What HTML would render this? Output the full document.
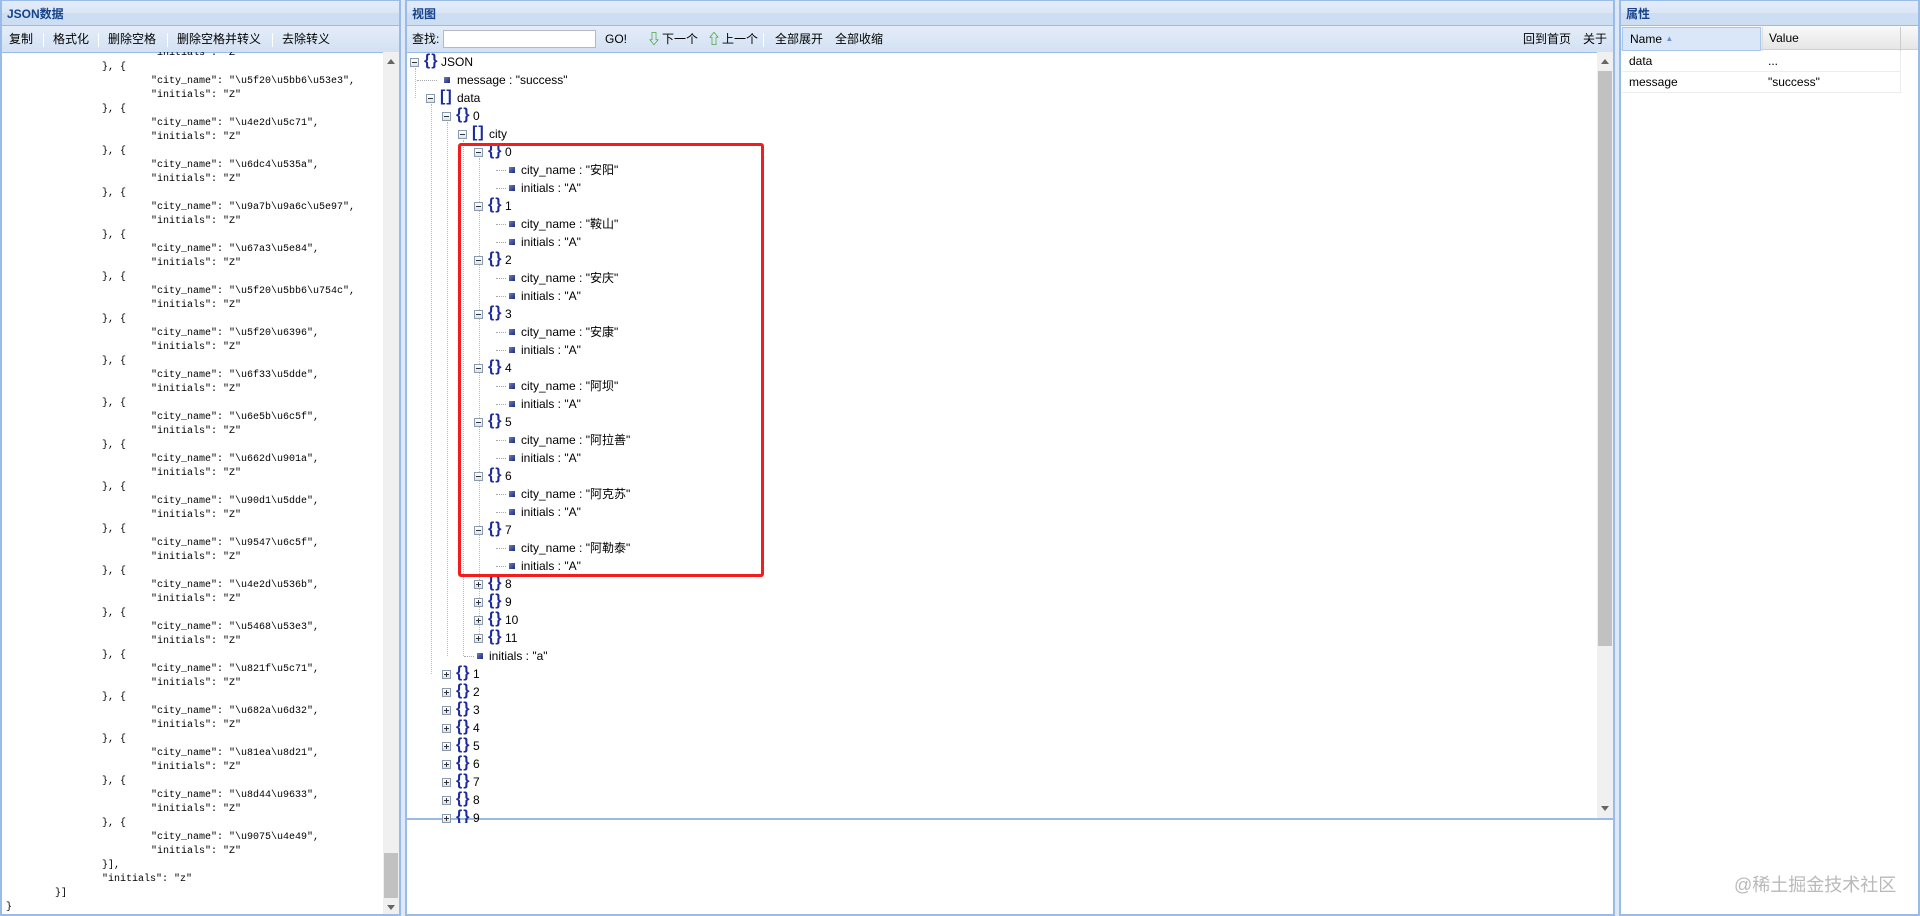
<!DOCTYPE html>
<html><head><meta charset="utf-8">
<style>
*{margin:0;padding:0;box-sizing:border-box}
body{width:1920px;height:916px;background:#dfe8f6;position:relative;overflow:hidden;font-family:"Liberation Sans","Noto Sans CJK SC",sans-serif;font-size:12px;color:#000}
.panel{position:absolute;top:0;border:2px solid #99bbe8;background:#fff;overflow:hidden}
.title{position:absolute;left:0;right:0;top:0;height:25px;background:linear-gradient(#e3ecf9 0,#dae6f6 50%,#cddef3 51%,#cddef3 100%);border-bottom:1px solid #99bbe8;color:#15428b;font-weight:bold;font-size:12px;line-height:26px;padding-left:5px}
.tb{position:absolute;left:0;right:0;top:25px;height:27px;background:linear-gradient(#e4edf9,#d3e1f3);border-bottom:1px solid #99bbe8;font-size:12px;line-height:27px}
.tb span{position:absolute;top:0;white-space:nowrap}
.sep{position:absolute;top:7px;width:1px;height:14px;background:#aac3e4;border-right:1px solid #fff}
.code{position:absolute;left:0;top:51px;width:381px;bottom:0;overflow:hidden;font-family:"Liberation Mono",monospace;font-size:10px;line-height:14px}
.code div{white-space:pre;height:14px}
.sb{position:absolute;background:#f0f0f0}
.row{position:absolute;height:18px;line-height:18px;white-space:nowrap}
.tg{position:absolute;width:9px;height:9px;border:1px solid #8a9bb0;background:linear-gradient(#fff,#dde4ec);top:5px}
.tg:before{content:"";position:absolute;left:1px;top:3px;width:5px;height:1px;background:#333}
.tg.p:after{content:"";position:absolute;left:3px;top:1px;width:1px;height:5px;background:#333}
.ic{position:absolute;top:-1px;color:#1b2b9c;font-weight:bold;font-size:16px;font-family:"Liberation Sans",sans-serif;letter-spacing:1px;width:14px;overflow:hidden}
.bl{position:absolute;width:6px;height:6px;top:6px;background:linear-gradient(135deg,#6d7fbf,#1a2a7a)}
.dt{position:absolute;top:9px;height:1px;border-top:1px dotted #aaa}
.vl{position:absolute;width:1px;border-left:1px dotted #bbb}
.tx{position:absolute;top:0}
</style></head><body>

<!-- LEFT PANEL -->
<div class="panel" style="left:0;width:401px;height:916px;border-top-width:1px">
<div class="title">JSON数据</div>
<div class="tb">
<span style="left:7px">复制</span><div class="sep" style="left:41px"></div>
<span style="left:51px">格式化</span><div class="sep" style="left:96px"></div>
<span style="left:106px">删除空格</span><div class="sep" style="left:165px"></div>
<span style="left:175px">删除空格并转义</span><div class="sep" style="left:270px"></div>
<span style="left:280px">去除转义</span>
</div>
<div class="code">
<div style="margin-top:-5px;padding-left:149px">"initials": "Z"</div>
<div style="padding-left:100px">}, {</div><div style="padding-left:149px">"city_name": "\u5f20\u5bb6\u53e3",</div><div style="padding-left:149px">"initials": "Z"</div>
<div style="padding-left:100px">}, {</div><div style="padding-left:149px">"city_name": "\u4e2d\u5c71",</div><div style="padding-left:149px">"initials": "Z"</div>
<div style="padding-left:100px">}, {</div><div style="padding-left:149px">"city_name": "\u6dc4\u535a",</div><div style="padding-left:149px">"initials": "Z"</div>
<div style="padding-left:100px">}, {</div><div style="padding-left:149px">"city_name": "\u9a7b\u9a6c\u5e97",</div><div style="padding-left:149px">"initials": "Z"</div>
<div style="padding-left:100px">}, {</div><div style="padding-left:149px">"city_name": "\u67a3\u5e84",</div><div style="padding-left:149px">"initials": "Z"</div>
<div style="padding-left:100px">}, {</div><div style="padding-left:149px">"city_name": "\u5f20\u5bb6\u754c",</div><div style="padding-left:149px">"initials": "Z"</div>
<div style="padding-left:100px">}, {</div><div style="padding-left:149px">"city_name": "\u5f20\u6396",</div><div style="padding-left:149px">"initials": "Z"</div>
<div style="padding-left:100px">}, {</div><div style="padding-left:149px">"city_name": "\u6f33\u5dde",</div><div style="padding-left:149px">"initials": "Z"</div>
<div style="padding-left:100px">}, {</div><div style="padding-left:149px">"city_name": "\u6e5b\u6c5f",</div><div style="padding-left:149px">"initials": "Z"</div>
<div style="padding-left:100px">}, {</div><div style="padding-left:149px">"city_name": "\u662d\u901a",</div><div style="padding-left:149px">"initials": "Z"</div>
<div style="padding-left:100px">}, {</div><div style="padding-left:149px">"city_name": "\u90d1\u5dde",</div><div style="padding-left:149px">"initials": "Z"</div>
<div style="padding-left:100px">}, {</div><div style="padding-left:149px">"city_name": "\u9547\u6c5f",</div><div style="padding-left:149px">"initials": "Z"</div>
<div style="padding-left:100px">}, {</div><div style="padding-left:149px">"city_name": "\u4e2d\u536b",</div><div style="padding-left:149px">"initials": "Z"</div>
<div style="padding-left:100px">}, {</div><div style="padding-left:149px">"city_name": "\u5468\u53e3",</div><div style="padding-left:149px">"initials": "Z"</div>
<div style="padding-left:100px">}, {</div><div style="padding-left:149px">"city_name": "\u821f\u5c71",</div><div style="padding-left:149px">"initials": "Z"</div>
<div style="padding-left:100px">}, {</div><div style="padding-left:149px">"city_name": "\u682a\u6d32",</div><div style="padding-left:149px">"initials": "Z"</div>
<div style="padding-left:100px">}, {</div><div style="padding-left:149px">"city_name": "\u81ea\u8d21",</div><div style="padding-left:149px">"initials": "Z"</div>
<div style="padding-left:100px">}, {</div><div style="padding-left:149px">"city_name": "\u8d44\u9633",</div><div style="padding-left:149px">"initials": "Z"</div>
<div style="padding-left:100px">}, {</div><div style="padding-left:149px">"city_name": "\u9075\u4e49",</div><div style="padding-left:149px">"initials": "Z"</div>
<div style="padding-left:100px">}],</div>
<div style="padding-left:100px">"initials": "z"</div>
<div style="padding-left:53px">}]</div>
<div style="padding-left:4px">}</div>
</div>
<div class="sb" style="left:381px;top:51px;width:16px;height:865px">
<div style="position:absolute;left:4px;top:7px;border:4px solid transparent;border-bottom:5px solid #666;border-top:0"></div>
<div style="position:absolute;left:1px;top:801px;width:14px;height:45px;background:#c1c1c1"></div>
<div style="position:absolute;left:4px;top:853px;border:4px solid transparent;border-top:5px solid #666;border-bottom:0"></div>
</div>
</div>

<!-- MIDDLE PANEL -->
<div class="panel" style="left:405px;width:1210px;height:916px;border-top-width:1px">
<div class="title">视图</div>
<div class="tb">
<span style="left:5px">查找:</span>
<div style="position:absolute;left:36px;top:4px;width:153px;height:18px;background:#fff;border:1px solid #b5b8c8"></div>
<span style="left:198px">GO!</span>
<span style="left:240px;color:#3a9c2a;font-weight:bold;font-size:14px">⇩</span><span style="left:255px">下一个</span>
<span style="left:300px;color:#3a9c2a;font-weight:bold;font-size:14px">⇧</span><span style="left:315px">上一个</span>
<div class="sep" style="left:356px"></div>
<span style="left:368px">全部展开</span>
<span style="left:428px">全部收缩</span>
<span style="left:1116px">回到首页</span>
<span style="left:1176px">关于</span>
</div>
<div style="position:absolute;left:0;right:0;top:817px;height:2px;background:#99bbe8"></div>
<div class="sb" style="left:1190px;top:51px;width:16px;height:766px">
<div style="position:absolute;left:4px;top:7px;border:4px solid transparent;border-bottom:5px solid #666;border-top:0"></div>
<div style="position:absolute;left:1px;top:19px;width:14px;height:575px;background:#c1c1c1"></div>
<div style="position:absolute;left:4px;top:754px;border:4px solid transparent;border-top:5px solid #666;border-bottom:0"></div>
</div>
</div>

<!-- TREE -->
<div style="position:absolute;left:0;top:0">
<div class="vl" style="left:415px;top:68px;height:30px"></div>
<div class="vl" style="left:431px;top:104px;height:570px"></div>
<div class="vl" style="left:447px;top:122px;height:534px"></div>
<div class="vl" style="left:463px;top:140px;height:516px"></div>
<div class="vl" style="left:479px;top:158px;height:480px"></div>

<div class="row" style="top:53px"><div class="tg" style="left:410px"></div><span class="ic" style="left:424px">{}</span><span class="tx" style="left:441px">JSON</span></div>
<div class="row" style="top:71px"><div class="dt" style="left:417px;width:20px"></div><div class="bl" style="left:444px"></div><span class="tx" style="left:457px">message : "success"</span></div>
<div class="row" style="top:89px"><div class="tg" style="left:426px"></div><span class="ic" style="left:440px">[]</span><span class="tx" style="left:457px">data</span></div>
<div class="row" style="top:107px"><div class="tg" style="left:442px"></div><span class="ic" style="left:456px">{}</span><span class="tx" style="left:473px">0</span></div>
<div class="row" style="top:125px"><div class="tg" style="left:458px"></div><span class="ic" style="left:472px">[]</span><span class="tx" style="left:489px">city</span></div>

<div class="row" style="top:143px"><div class="tg" style="left:474px"></div><span class="ic" style="left:488px">{}</span><span class="tx" style="left:505px">0</span></div>
<div class="row" style="top:161px"><div class="dt" style="left:496px;width:10px"></div><div class="bl" style="left:509px"></div><span class="tx" style="left:521px">city_name : "安阳"</span></div>
<div class="row" style="top:179px"><div class="dt" style="left:496px;width:10px"></div><div class="bl" style="left:509px"></div><span class="tx" style="left:521px">initials : "A"</span></div>
<div class="row" style="top:197px"><div class="tg" style="left:474px"></div><span class="ic" style="left:488px">{}</span><span class="tx" style="left:505px">1</span></div>
<div class="row" style="top:215px"><div class="dt" style="left:496px;width:10px"></div><div class="bl" style="left:509px"></div><span class="tx" style="left:521px">city_name : "鞍山"</span></div>
<div class="row" style="top:233px"><div class="dt" style="left:496px;width:10px"></div><div class="bl" style="left:509px"></div><span class="tx" style="left:521px">initials : "A"</span></div>
<div class="row" style="top:251px"><div class="tg" style="left:474px"></div><span class="ic" style="left:488px">{}</span><span class="tx" style="left:505px">2</span></div>
<div class="row" style="top:269px"><div class="dt" style="left:496px;width:10px"></div><div class="bl" style="left:509px"></div><span class="tx" style="left:521px">city_name : "安庆"</span></div>
<div class="row" style="top:287px"><div class="dt" style="left:496px;width:10px"></div><div class="bl" style="left:509px"></div><span class="tx" style="left:521px">initials : "A"</span></div>
<div class="row" style="top:305px"><div class="tg" style="left:474px"></div><span class="ic" style="left:488px">{}</span><span class="tx" style="left:505px">3</span></div>
<div class="row" style="top:323px"><div class="dt" style="left:496px;width:10px"></div><div class="bl" style="left:509px"></div><span class="tx" style="left:521px">city_name : "安康"</span></div>
<div class="row" style="top:341px"><div class="dt" style="left:496px;width:10px"></div><div class="bl" style="left:509px"></div><span class="tx" style="left:521px">initials : "A"</span></div>
<div class="row" style="top:359px"><div class="tg" style="left:474px"></div><span class="ic" style="left:488px">{}</span><span class="tx" style="left:505px">4</span></div>
<div class="row" style="top:377px"><div class="dt" style="left:496px;width:10px"></div><div class="bl" style="left:509px"></div><span class="tx" style="left:521px">city_name : "阿坝"</span></div>
<div class="row" style="top:395px"><div class="dt" style="left:496px;width:10px"></div><div class="bl" style="left:509px"></div><span class="tx" style="left:521px">initials : "A"</span></div>
<div class="row" style="top:413px"><div class="tg" style="left:474px"></div><span class="ic" style="left:488px">{}</span><span class="tx" style="left:505px">5</span></div>
<div class="row" style="top:431px"><div class="dt" style="left:496px;width:10px"></div><div class="bl" style="left:509px"></div><span class="tx" style="left:521px">city_name : "阿拉善"</span></div>
<div class="row" style="top:449px"><div class="dt" style="left:496px;width:10px"></div><div class="bl" style="left:509px"></div><span class="tx" style="left:521px">initials : "A"</span></div>
<div class="row" style="top:467px"><div class="tg" style="left:474px"></div><span class="ic" style="left:488px">{}</span><span class="tx" style="left:505px">6</span></div>
<div class="row" style="top:485px"><div class="dt" style="left:496px;width:10px"></div><div class="bl" style="left:509px"></div><span class="tx" style="left:521px">city_name : "阿克苏"</span></div>
<div class="row" style="top:503px"><div class="dt" style="left:496px;width:10px"></div><div class="bl" style="left:509px"></div><span class="tx" style="left:521px">initials : "A"</span></div>
<div class="row" style="top:521px"><div class="tg" style="left:474px"></div><span class="ic" style="left:488px">{}</span><span class="tx" style="left:505px">7</span></div>
<div class="row" style="top:539px"><div class="dt" style="left:496px;width:10px"></div><div class="bl" style="left:509px"></div><span class="tx" style="left:521px">city_name : "阿勒泰"</span></div>
<div class="row" style="top:557px"><div class="dt" style="left:496px;width:10px"></div><div class="bl" style="left:509px"></div><span class="tx" style="left:521px">initials : "A"</span></div>

<div class="row" style="top:575px"><div class="tg p" style="left:474px"></div><span class="ic" style="left:488px">{}</span><span class="tx" style="left:505px">8</span></div>
<div class="row" style="top:593px"><div class="tg p" style="left:474px"></div><span class="ic" style="left:488px">{}</span><span class="tx" style="left:505px">9</span></div>
<div class="row" style="top:611px"><div class="tg p" style="left:474px"></div><span class="ic" style="left:488px">{}</span><span class="tx" style="left:505px">10</span></div>
<div class="row" style="top:629px"><div class="tg p" style="left:474px"></div><span class="ic" style="left:488px">{}</span><span class="tx" style="left:505px">11</span></div>
<div class="row" style="top:647px"><div class="dt" style="left:464px;width:10px"></div><div class="bl" style="left:477px"></div><span class="tx" style="left:489px">initials : "a"</span></div>

<div class="row" style="top:665px"><div class="tg p" style="left:442px"></div><span class="ic" style="left:456px">{}</span><span class="tx" style="left:473px">1</span></div>
<div class="row" style="top:683px"><div class="tg p" style="left:442px"></div><span class="ic" style="left:456px">{}</span><span class="tx" style="left:473px">2</span></div>
<div class="row" style="top:701px"><div class="tg p" style="left:442px"></div><span class="ic" style="left:456px">{}</span><span class="tx" style="left:473px">3</span></div>
<div class="row" style="top:719px"><div class="tg p" style="left:442px"></div><span class="ic" style="left:456px">{}</span><span class="tx" style="left:473px">4</span></div>
<div class="row" style="top:737px"><div class="tg p" style="left:442px"></div><span class="ic" style="left:456px">{}</span><span class="tx" style="left:473px">5</span></div>
<div class="row" style="top:755px"><div class="tg p" style="left:442px"></div><span class="ic" style="left:456px">{}</span><span class="tx" style="left:473px">6</span></div>
<div class="row" style="top:773px"><div class="tg p" style="left:442px"></div><span class="ic" style="left:456px">{}</span><span class="tx" style="left:473px">7</span></div>
<div class="row" style="top:791px"><div class="tg p" style="left:442px"></div><span class="ic" style="left:456px">{}</span><span class="tx" style="left:473px">8</span></div>
<div style="position:absolute;left:407px;top:809px;width:1188px;height:14px;overflow:hidden">
<div class="row" style="top:0"><div class="tg p" style="left:35px"></div><span class="ic" style="left:49px">{}</span><span class="tx" style="left:66px">9</span></div>
</div>

<div style="position:absolute;left:458px;top:143px;width:306px;height:434px;border:3px solid #f41d1d;border-radius:3px"></div>
</div>

<!-- RIGHT PANEL -->
<div class="panel" style="left:1619px;width:301px;height:916px;border-top-width:1px">
<div class="title">属性</div>
<div style="position:absolute;left:0;top:25px;width:297px;height:24px;background:linear-gradient(#f9f9f9,#e6e6e6);border-bottom:1px solid #d0d0d0"></div>
<div style="position:absolute;left:1px;top:26px;width:139px;height:24px;background:#d9e7f8;border:1px solid #a9c6ee;line-height:22px;padding-left:7px">Name <span style="color:#6c94cc;font-size:8px;vertical-align:2px">▲</span></div>
<div style="position:absolute;left:141px;top:26px;width:139px;height:24px;border-left:1px solid #ddd;border-right:1px solid #ccc;line-height:22px;padding-left:6px">Value</div>
<div style="position:absolute;left:1px;top:50px;width:279px;height:21px;border-bottom:1px solid #ededed;border-right:1px solid #ededed;line-height:20px">
<span style="position:absolute;left:7px">data</span><span style="position:absolute;left:146px">...</span></div>
<div style="position:absolute;left:1px;top:71px;width:279px;height:21px;border-bottom:1px solid #ededed;border-right:1px solid #ededed;line-height:20px">
<span style="position:absolute;left:7px">message</span><span style="position:absolute;left:146px">"success"</span></div>
</div>

<div style="position:absolute;left:1734px;top:871px;font-size:18px;color:#b9b9b9;white-space:nowrap">@稀土掘金技术社区</div>
</body></html>
